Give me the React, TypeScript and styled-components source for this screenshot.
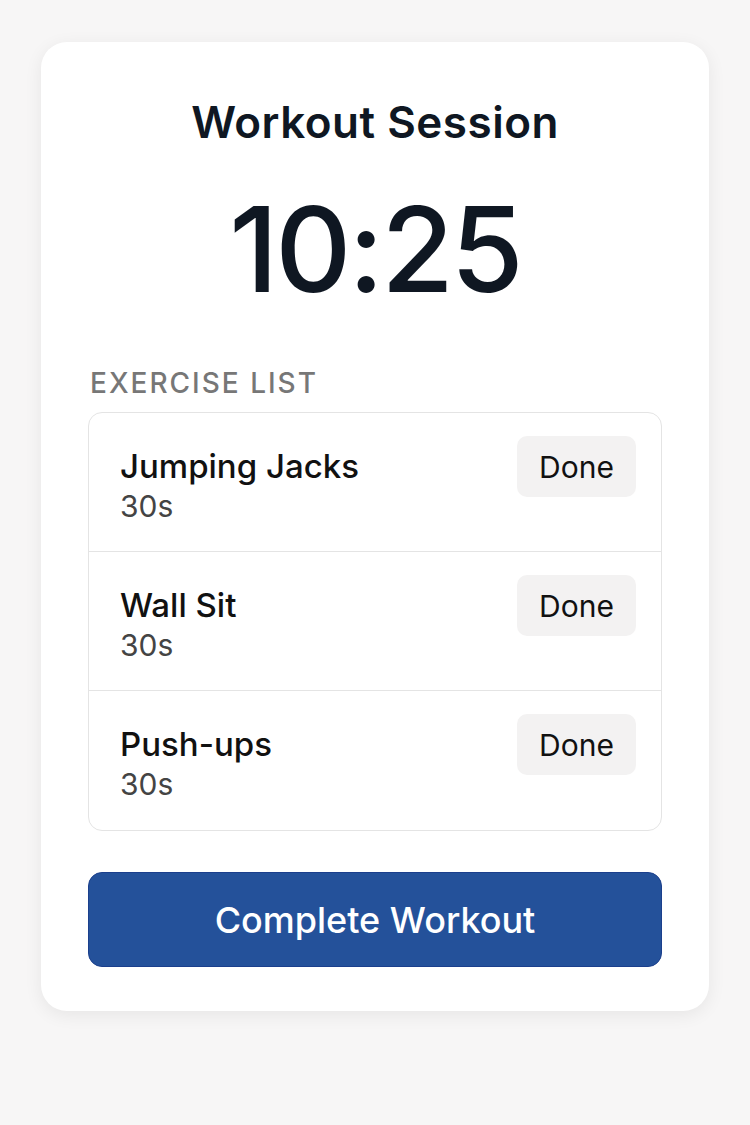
import React from "react";
import styled, { createGlobalStyle } from "styled-components";

const Global = createGlobalStyle`
  html, body { margin: 0; padding: 0; background: #f7f6f6; }
  body { font-family: Inter, "Noto Sans", sans-serif; -webkit-font-smoothing: antialiased; }
`;

const Page = styled.div`
  width: 750px;
  min-height: 1125px;
  padding: 42px 41px 0;
  box-sizing: border-box;
`;

const Card = styled.div`
  background: #ffffff;
  border-radius: 26px;
  box-shadow: 0 4px 18px rgba(0, 0, 0, 0.07);
  padding: 55px 47px 44px;
  display: flex;
  flex-direction: column;
`;

const Title = styled.h1`
  margin: 0;
  text-align: center;
  font-size: 44px;
  font-weight: 600;
  color: #0f1722;
  line-height: 50px;
  letter-spacing: 0.5px;
`;

const Timer = styled.div`
  margin-top: 38px;
  text-align: center;
  font-size: 118px;
  font-weight: 500;
  color: #0f1722;
  line-height: 128px;
  letter-spacing: -3px;
`;

const SectionLabel = styled.div`
  margin-top: 53px;
  font-size: 28px;
  font-weight: 500;
  letter-spacing: 2px;
  color: #777777;
  line-height: 34px;
  padding-left: 2px;
`;

const List = styled.div`
  margin-top: 12px;
  border: 1.5px solid #e4e4e4;
  border-radius: 14px;
  display: flex;
  flex-direction: column;
`;

const Row = styled.div<{ $last?: boolean }>`
  height: 139px;
  box-sizing: border-box;
  padding: 23px 25px 0 31px;
  display: flex;
  justify-content: space-between;
  align-items: flex-start;
  border-bottom: ${(p) => (p.$last ? "none" : "1.5px solid #e4e4e4")};
`;

const Info = styled.div`
  display: flex;
  flex-direction: column;
  padding-top: 10px;
`;

const Name = styled.div`
  font-size: 33px;
  font-weight: 500;
  color: #111111;
  line-height: 40px;
`;

const Duration = styled.div`
  font-size: 30px;
  color: #444444;
  line-height: 40px;
`;

const DoneButton = styled.button`
  font-family: inherit;
  width: 119px;
  height: 61px;
  border: none;
  border-radius: 10px;
  background: #f3f2f2;
  font-size: 30px;
  color: #111111;
  cursor: pointer;
`;

const CompleteButton = styled.button`
  margin-top: 41px;
  height: 95px;
  font-family: inherit;
  background: #24519a;
  border: 1.5px solid #1b3f8c;
  border-radius: 14px;
  color: #ffffff;
  font-size: 36px;
  font-weight: 500;
  cursor: pointer;
`;

const exercises = [
  { name: "Jumping Jacks", duration: "30s" },
  { name: "Wall Sit", duration: "30s" },
  { name: "Push-ups", duration: "30s" },
];

export default function App() {
  return (
    <>
      <Global />
      <Page>
        <Card>
          <Title>Workout Session</Title>
          <Timer>10:25</Timer>
          <SectionLabel>EXERCISE LIST</SectionLabel>
          <List>
            {exercises.map((e, i) => (
              <Row key={e.name} $last={i === exercises.length - 1}>
                <Info>
                  <Name>{e.name}</Name>
                  <Duration>{e.duration}</Duration>
                </Info>
                <DoneButton>Done</DoneButton>
              </Row>
            ))}
          </List>
          <CompleteButton>Complete Workout</CompleteButton>
        </Card>
      </Page>
    </>
  );
}
